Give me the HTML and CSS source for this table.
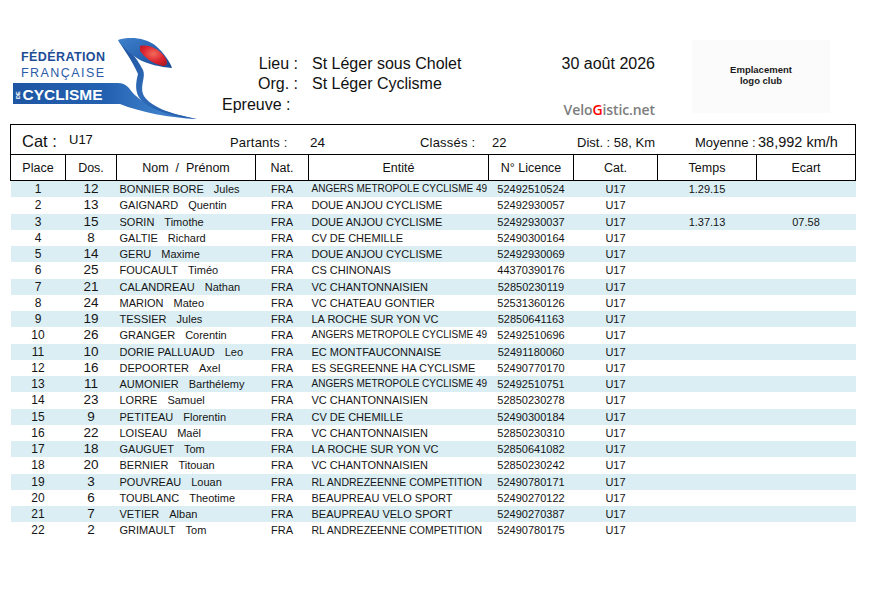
FILE: index.html
```html
<!DOCTYPE html>
<html lang="fr">
<head>
<meta charset="utf-8">
<title>Classement U17 - St Léger sous Cholet</title>
<link rel="stylesheet" href="styles.css">
</head>
<body>
<div class="page">
  <div class="header">
    <svg class="logo" width="205" height="124" viewBox="0 0 205 124" xmlns="http://www.w3.org/2000/svg">
      <defs>
        <linearGradient id="bandg" x1="0" y1="0" x2="1" y2="0">
          <stop offset="0" stop-color="#1f56a3"/>
          <stop offset="0.5" stop-color="#2361b0"/>
          <stop offset="0.8" stop-color="#3d7fc9"/>
          <stop offset="1" stop-color="#2a66b4"/>
        </linearGradient>
        <linearGradient id="tailg" x1="0" y1="0" x2="1" y2="1">
          <stop offset="0" stop-color="#1d4f9c"/>
          <stop offset="0.5" stop-color="#2f6bb8"/>
          <stop offset="1" stop-color="#1f56a3"/>
        </linearGradient>
        <linearGradient id="headg" x1="0" y1="0" x2="1" y2="1">
          <stop offset="0" stop-color="#3f82cc"/>
          <stop offset="0.55" stop-color="#2862b0"/>
          <stop offset="1" stop-color="#1a4a92"/>
        </linearGradient>
        <radialGradient id="redg" cx="0.5" cy="0.4" r="0.65">
          <stop offset="0" stop-color="#f36a5a"/>
          <stop offset="0.6" stop-color="#dc2430"/>
          <stop offset="1" stop-color="#b31a24"/>
        </radialGradient>
      </defs>
      <path d="M13 83 L118 83 C124 83 128 86 132 92 C142 104 165 113 197 119 C170 118 140 112 120 104 L13 104 Z" fill="url(#bandg)"/>
      <path d="M118 40 C126 46 136 56 143 70 C146 77 140 85 143 94 C148 106 170 114 197 119 C172 116 150 110 141 100 C134 92 136 82 138 74 C132 60 124 50 118 40 Z" fill="url(#tailg)"/>
      <path d="M118 40 C130 36 146 38 156 46 C164 53 170 62 172 68 C160 67 148 64 140 60 C130 54 122 47 118 40 Z" fill="url(#headg)"/>
      <path d="M140 46 C150 44 161 50 166 59 C168 63 167 66 163 66 C153 64 145 58 140 51 Z" fill="url(#redg)"/>
      <text x="21" y="61" class="ffc1" textLength="84" lengthAdjust="spacing">FÉDÉRATION</text>
      <text x="21" y="77" class="ffc2" textLength="83" lengthAdjust="spacing">FRANÇAISE</text>
      <text x="19.5" y="99" class="ffcde" transform="rotate(-90 19.5 99)">DE</text>
      <text x="22.5" y="100" class="ffc3" textLength="80" lengthAdjust="spacingAndGlyphs">CYCLISME</text>
    </svg>
    <div class="info">
      <span class="lbl">Lieu :</span><span class="val">St Léger sous Cholet</span>
      <span class="lbl">Org. :</span><span class="val">St Léger Cyclisme</span>
      <span class="lbl left">Epreuve :</span><span class="val"></span>
    </div>
    <div class="datecol">
      <div class="date">30 août 2026</div>
      <div class="brand">Velo<span class="g">G</span>istic.net</div>
    </div>
    <div class="club">
      <span>Emplacement</span>
      <span>logo club</span>
    </div>
  </div>

  <div class="stats"><span class="s w-catl big">Cat :</span><span class="s w-catv up">U17</span><span class="s w-pl">Partants :</span><span class="s w-pv">24</span><span class="s w-cl">Classés :</span><span class="s w-cv">22</span><span class="s w-dist">Dist. : 58, Km</span><span class="s w-ml">Moyenne :</span><span class="s w-mv">38,992 km/h</span></div>

  <table class="results">
    <colgroup>
      <col class="k-place"><col class="k-dos"><col class="k-nom"><col class="k-nat"><col class="k-ent"><col class="k-lic"><col class="k-cat"><col class="k-tps"><col class="k-ecart">
    </colgroup>
    <thead>
      <tr>
        <th>Place</th><th>Dos.</th><th class="nomh">Nom  /  Prénom</th><th>Nat.</th><th>Entité</th><th>N° Licence</th><th>Cat.</th><th>Temps</th><th>Ecart</th>
      </tr>
    </thead>
    <tbody>
      <tr class="alt"><td class="c pl">1</td><td class="c ds">12</td><td class="l">BONNIER BORE<span class="fn">Jules</span></td><td class="c">FRA</td><td class="l xs">ANGERS METROPOLE CYCLISME 49</td><td class="c">52492510524</td><td class="c">U17</td><td class="c">1.29.15</td><td class="c"></td></tr>
      <tr><td class="c pl">2</td><td class="c ds">13</td><td class="l">GAIGNARD<span class="fn">Quentin</span></td><td class="c">FRA</td><td class="l">DOUE ANJOU CYCLISME</td><td class="c">52492930057</td><td class="c">U17</td><td class="c"></td><td class="c"></td></tr>
      <tr class="alt"><td class="c pl">3</td><td class="c ds">15</td><td class="l">SORIN<span class="fn">Timothe</span></td><td class="c">FRA</td><td class="l">DOUE ANJOU CYCLISME</td><td class="c">52492930037</td><td class="c">U17</td><td class="c">1.37.13</td><td class="c">07.58</td></tr>
      <tr><td class="c pl">4</td><td class="c ds">8</td><td class="l">GALTIE<span class="fn">Richard</span></td><td class="c">FRA</td><td class="l">CV DE CHEMILLE</td><td class="c">52490300164</td><td class="c">U17</td><td class="c"></td><td class="c"></td></tr>
      <tr class="alt"><td class="c pl">5</td><td class="c ds">14</td><td class="l">GERU<span class="fn">Maxime</span></td><td class="c">FRA</td><td class="l">DOUE ANJOU CYCLISME</td><td class="c">52492930069</td><td class="c">U17</td><td class="c"></td><td class="c"></td></tr>
      <tr><td class="c pl">6</td><td class="c ds">25</td><td class="l">FOUCAULT<span class="fn">Timéo</span></td><td class="c">FRA</td><td class="l">CS CHINONAIS</td><td class="c">44370390176</td><td class="c">U17</td><td class="c"></td><td class="c"></td></tr>
      <tr class="alt"><td class="c pl">7</td><td class="c ds">21</td><td class="l">CALANDREAU<span class="fn">Nathan</span></td><td class="c">FRA</td><td class="l">VC CHANTONNAISIEN</td><td class="c">52850230119</td><td class="c">U17</td><td class="c"></td><td class="c"></td></tr>
      <tr><td class="c pl">8</td><td class="c ds">24</td><td class="l">MARION<span class="fn">Mateo</span></td><td class="c">FRA</td><td class="l">VC CHATEAU GONTIER</td><td class="c">52531360126</td><td class="c">U17</td><td class="c"></td><td class="c"></td></tr>
      <tr class="alt"><td class="c pl">9</td><td class="c ds">19</td><td class="l">TESSIER<span class="fn">Jules</span></td><td class="c">FRA</td><td class="l">LA ROCHE SUR YON VC</td><td class="c">52850641163</td><td class="c">U17</td><td class="c"></td><td class="c"></td></tr>
      <tr><td class="c pl">10</td><td class="c ds">26</td><td class="l">GRANGER<span class="fn">Corentin</span></td><td class="c">FRA</td><td class="l xs">ANGERS METROPOLE CYCLISME 49</td><td class="c">52492510696</td><td class="c">U17</td><td class="c"></td><td class="c"></td></tr>
      <tr class="alt"><td class="c pl">11</td><td class="c ds">10</td><td class="l">DORIE PALLUAUD<span class="fn">Leo</span></td><td class="c">FRA</td><td class="l">EC MONTFAUCONNAISE</td><td class="c">52491180060</td><td class="c">U17</td><td class="c"></td><td class="c"></td></tr>
      <tr><td class="c pl">12</td><td class="c ds">16</td><td class="l">DEPOORTER<span class="fn">Axel</span></td><td class="c">FRA</td><td class="l">ES SEGREENNE HA CYCLISME</td><td class="c">52490770170</td><td class="c">U17</td><td class="c"></td><td class="c"></td></tr>
      <tr class="alt"><td class="c pl">13</td><td class="c ds">11</td><td class="l">AUMONIER<span class="fn">Barthélemy</span></td><td class="c">FRA</td><td class="l xs">ANGERS METROPOLE CYCLISME 49</td><td class="c">52492510751</td><td class="c">U17</td><td class="c"></td><td class="c"></td></tr>
      <tr><td class="c pl">14</td><td class="c ds">23</td><td class="l">LORRE<span class="fn">Samuel</span></td><td class="c">FRA</td><td class="l">VC CHANTONNAISIEN</td><td class="c">52850230278</td><td class="c">U17</td><td class="c"></td><td class="c"></td></tr>
      <tr class="alt"><td class="c pl">15</td><td class="c ds">9</td><td class="l">PETITEAU<span class="fn">Florentin</span></td><td class="c">FRA</td><td class="l">CV DE CHEMILLE</td><td class="c">52490300184</td><td class="c">U17</td><td class="c"></td><td class="c"></td></tr>
      <tr><td class="c pl">16</td><td class="c ds">22</td><td class="l">LOISEAU<span class="fn">Maël</span></td><td class="c">FRA</td><td class="l">VC CHANTONNAISIEN</td><td class="c">52850230310</td><td class="c">U17</td><td class="c"></td><td class="c"></td></tr>
      <tr class="alt"><td class="c pl">17</td><td class="c ds">18</td><td class="l">GAUGUET<span class="fn">Tom</span></td><td class="c">FRA</td><td class="l">LA ROCHE SUR YON VC</td><td class="c">52850641082</td><td class="c">U17</td><td class="c"></td><td class="c"></td></tr>
      <tr><td class="c pl">18</td><td class="c ds">20</td><td class="l">BERNIER<span class="fn">Titouan</span></td><td class="c">FRA</td><td class="l">VC CHANTONNAISIEN</td><td class="c">52850230242</td><td class="c">U17</td><td class="c"></td><td class="c"></td></tr>
      <tr class="alt"><td class="c pl">19</td><td class="c ds">3</td><td class="l">POUVREAU<span class="fn">Louan</span></td><td class="c">FRA</td><td class="l sm">RL ANDREZEENNE COMPETITION</td><td class="c">52490780171</td><td class="c">U17</td><td class="c"></td><td class="c"></td></tr>
      <tr><td class="c pl">20</td><td class="c ds">6</td><td class="l">TOUBLANC<span class="fn">Theotime</span></td><td class="c">FRA</td><td class="l">BEAUPREAU VELO SPORT</td><td class="c">52490270122</td><td class="c">U17</td><td class="c"></td><td class="c"></td></tr>
      <tr class="alt"><td class="c pl">21</td><td class="c ds">7</td><td class="l">VETIER<span class="fn">Alban</span></td><td class="c">FRA</td><td class="l">BEAUPREAU VELO SPORT</td><td class="c">52490270387</td><td class="c">U17</td><td class="c"></td><td class="c"></td></tr>
      <tr><td class="c pl">22</td><td class="c ds">2</td><td class="l">GRIMAULT<span class="fn">Tom</span></td><td class="c">FRA</td><td class="l sm">RL ANDREZEENNE COMPETITION</td><td class="c">52490780175</td><td class="c">U17</td><td class="c"></td><td class="c"></td></tr>
    </tbody>
  </table>
</div>
</body>
</html>
```

FILE: styles.css
```css
html, body {
  margin: 0;
  padding: 0;
  background: #ffffff;
}

body {
  font-family: "Liberation Sans", Arial, sans-serif;
  color: #000;
}

.page {
  width: 875px;
}

/* ---------- header ---------- */
.header {
  display: flex;
  height: 124px;
}

.logo {
  flex: none;
  display: block;
  width: 205px;
  height: 124px;
}

.ffc1 {
  font-family: "Liberation Sans", Arial, sans-serif;
  font-weight: bold;
  font-size: 12.5px;
  fill: #1d4c96;
}

.ffc2 {
  font-family: "Liberation Sans", Arial, sans-serif;
  font-size: 12.5px;
  fill: #2a5ba6;
}

.ffc3 {
  font-family: "Liberation Sans", Arial, sans-serif;
  font-weight: bold;
  font-size: 15.5px;
  fill: #ffffff;
}

.ffcde {
  font-family: "Liberation Sans", Arial, sans-serif;
  font-weight: bold;
  font-size: 5.5px;
  fill: #ffffff;
}

.info {
  flex: none;
  width: 333px;
  padding-left: 17px;
  padding-top: 54px;
  display: grid;
  grid-template-columns: 76px auto;
  grid-auto-rows: 20px;
  column-gap: 14px;
  align-content: start;
  font-size: 16px;
  line-height: 20px;
  color: #111;
}

.lbl {
  text-align: right;
  white-space: nowrap;
}

.lbl.left {
  text-align: left;
  margin-top: 1px;
}

.val {
  white-space: nowrap;
}

.datecol {
  flex: none;
  width: 100px;
  padding-top: 54px;
  text-align: right;
}

.date {
  font-size: 16px;
  line-height: 20px;
  color: #111;
}

.brand {
  margin-top: 27px;
  font-family: "Open Sans", "DejaVu Sans", sans-serif;
  font-size: 14px;
  font-weight: 600;
  line-height: 17px;
  color: #7d7d7d;
  letter-spacing: -0.1px;
}

.brand .g {
  color: #ff0000;
}

.club {
  flex: none;
  box-sizing: border-box;
  margin-left: 37px;
  margin-top: 40px;
  width: 138px;
  height: 73px;
  padding-top: 24px;
  background: #fbfbfb;
  display: flex;
  flex-direction: column;
  align-items: center;
  font-size: 9.5px;
  font-weight: bold;
  line-height: 11px;
  color: #1a1a1a;
}

/* ---------- stats bar ---------- */
.stats {
  box-sizing: border-box;
  margin-left: 10px;
  width: 846px;
  height: 30px;
  border: 1px solid #000;
  border-bottom: 0;
  padding-left: 11px;
  padding-top: 2px;
  font-size: 13px;
  line-height: 26px;
  white-space: nowrap;
  color: #111;
}

.s {
  display: inline-block;
}

.big {
  font-size: 16.5px;
}

.up {
  vertical-align: 3px;
}

.w-catl { width: 47px; }
.w-catv { width: 161px; }
.w-pl { width: 80px; letter-spacing: 0.2px; }
.w-pv { width: 110px; font-size: 13.5px; }
.w-cl { width: 72px; letter-spacing: 0.2px; }
.w-cv { width: 85px; }
.w-dist { width: 118px; }
.w-ml { width: 63px; }
.w-mv { font-size: 14.5px; }

/* ---------- results table ---------- */
.results {
  margin-left: 10px;
  width: 845px;
  border-collapse: collapse;
  table-layout: fixed;
}

.k-place { width: 55px; }
.k-dos { width: 51px; }
.k-nom { width: 139px; }
.k-nat { width: 53px; }
.k-ent { width: 180px; }
.k-lic { width: 85px; }
.k-cat { width: 84px; }
.k-tps { width: 99px; }
.k-ecart { width: 99px; }

.results th {
  border: 1px solid #000;
  height: 25px;
  padding: 0;
  font-weight: normal;
  font-size: 12.5px;
  color: #111;
  text-align: center;
}

.results th.nomh {
  white-space: pre;
}

.results td {
  height: 16.25px;
  padding: 0;
  font-size: 11px;
  line-height: 16px;
  color: #151515;
  white-space: nowrap;
  overflow: hidden;
}

.results tr.alt td {
  background: #dbeef4;
}

.c {
  text-align: center;
}

.l {
  text-align: left;
  padding-left: 3px !important;
}

.pl {
  font-size: 12px !important;
}

.ds {
  font-size: 13.5px !important;
}

.fn {
  margin-left: 10px;
}

.xs {
  font-size: 10px !important;
}

.sm {
  font-size: 10.5px !important;
}
```
